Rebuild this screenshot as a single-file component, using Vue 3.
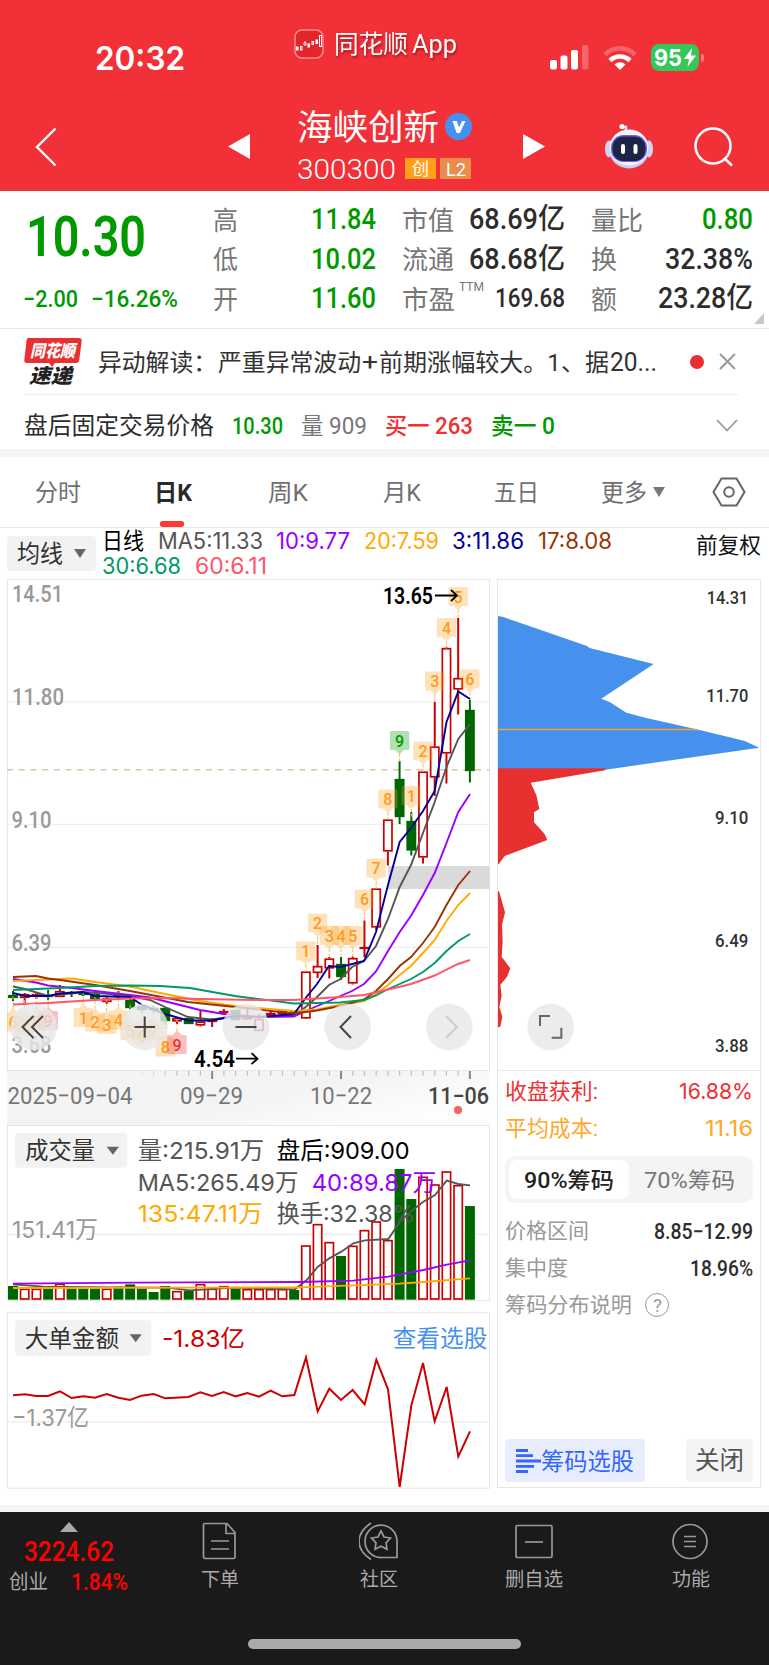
<template>
  <div class="page">
    <!-- Status bar + stock title -->
    <header class="header">
      <div class="status">
        <FitText class="clock" t="20:32" :w="90" :s="33" :b="600" f="Inter" />
        <div class="app-mark">
          <svg width="30" height="30" viewBox="0 0 30 30">
            <rect x="1" y="1" width="28" height="28" rx="7" fill="#e3262b" stroke="#f58a8c" stroke-width="1.6" />
            <g stroke="#fff" stroke-width="1" fill="none">
              <rect x="2.5" y="18" width="1.500" height="3" fill="#fff" />
              <rect x="6.500" y="17.500" width="1.500" height="3.500" />
              <path d="M10 16v-2l1-1.500 1 1.500v2z" />
              <rect x="14" y="15" width="1.500" height="3" fill="#fff" />
              <rect x="18" y="12.500" width="1.500" height="3" />
              <rect x="22" y="11" width="1.500" height="3.500" fill="#fff" />
              <rect x="25.500" y="6.500" width="2" height="11" />
            </g>
          </svg>
          <FitText t="同花顺" :w="74" :s="25" />
          <FitText class="app-word" t="App" :w="45" :s="25" />
        </div>
        <div class="sys">
          <svg width="40" height="26" viewBox="0 0 40 26" fill="#fff">
            <rect x="0" y="15" width="7" height="9.500" rx="2" />
            <rect x="10.500" y="10.500" width="7" height="14" rx="2" />
            <rect x="21" y="5" width="7" height="19.500" rx="2" />
            <rect x="32" y="0" width="6.500" height="24.500" rx="2" opacity=".25" />
          </svg>
          <svg width="34" height="26" viewBox="0 0 34 26" fill="none" stroke="#fff" stroke-width="4.600">
            <path d="M2 9.500a21.500 21.500 0 0 1 30 0" opacity=".25" />
            <path d="M7 15.500a14.500 14.500 0 0 1 20 0" />
            <path d="M11.500 19.500a8 8 0 0 1 11 0l-5.500 5.500z" fill="#fff" stroke="none" />
          </svg>
          <div class="battery">
            <FitText t="95" :w="28" :s="23" :b="700" f="Inter" />
            <svg width="12" height="19" viewBox="0 0 12 19"><path d="M8 0 0 11h5l-1.500 8L12 7.500H7z" fill="#fff" /></svg>
          </div>
          <i class="battery-nub"></i>
        </div>
      </div>

      <div class="title-bar">
        <svg class="back" width="22" height="40" viewBox="0 0 22 40"><path d="M20.500 1.500 2 20l18.500 18.500" fill="none" stroke="#fff" stroke-width="2.400" /></svg>
        <svg class="prev" width="22" height="25" viewBox="0 0 22 25"><path d="M22 0v25L0 12.500z" fill="#fff" /></svg>
        <div class="stock">
          <div class="stock-name">
            <FitText t="海峡创新" :w="142" :s="35" />
            <svg width="27" height="27" viewBox="0 0 27 27">
              <circle cx="13.500" cy="13.500" r="13.500" fill="#4691ee" />
              <path d="M7.500 8h4.300l2.200 6.500L17 8h3.500l-5.600 12h-3.300z" fill="#fff" />
            </svg>
          </div>
          <div class="stock-code">
            <FitText t="300300" :w="99" :s="28" :b="300" />
            <span class="tag tag-gem"><FitText t="创" :w="17" :s="17" /></span>
            <span class="tag tag-l2"><FitText t="L2" :w="20" :s="18" /></span>
          </div>
        </div>
        <svg class="next" width="22" height="25" viewBox="0 0 22 25"><path d="M0 0v25l22-12.500z" fill="#fff" /></svg>
        <svg class="robot" width="48" height="46" viewBox="0 0 48 46">
          <path d="M21 8V4h-4" fill="none" stroke="#dfe3fa" stroke-width="2.500" />
          <circle cx="17" cy="3.500" r="2.600" fill="#fff" />
          <ellipse cx="4" cy="26" rx="4" ry="8.500" fill="#cdd3f5" />
          <ellipse cx="44" cy="26" rx="4" ry="8.500" fill="#cdd3f5" />
          <ellipse cx="24" cy="26.500" rx="20" ry="19" fill="#cbd0f3" />
          <ellipse cx="24" cy="24.500" rx="19.500" ry="18" fill="#f1f2fd" />
          <rect x="6" y="12" width="36" height="27" rx="12.500" fill="#7460d8" />
          <rect x="7.500" y="13.500" width="33" height="24.500" rx="11" fill="#1c2547" />
          <rect x="16" y="21" width="4" height="10" rx="2" fill="#fff" />
          <rect x="28.500" y="21" width="4" height="10" rx="2" fill="#fff" />
        </svg>
        <svg width="42" height="40" viewBox="0 0 42 40" fill="none" stroke="#fff" stroke-width="2.500"><circle cx="20" cy="19" r="17.500" /><path d="m31 31 8 7.500" /></svg>
      </div>
    </header>

    <!-- Quote -->
    <section class="quote">
      <div class="price">
        <FitText t="10.30" :w="120" :s="56" :b="600" />
        <div class="change">
          <FitText t="−2.00" :w="55" :s="24" :b="500" />
          <FitText t="−16.26%" :w="87" :s="24" :b="500" />
        </div>
      </div>
      <div v-for="(group, g) in stats" :key="g" class="stats">
        <div v-for="row in group" :key="row.label" class="stat">
          <FitText class="label" :t="row.label" :w="row.lw" :s="26" />
          <FitText v-if="row.sup" class="sup" :t="row.sup" :w="25" :s="12" />
          <FitText :class="row.green ? 'green' : 'dark'" :t="row.value" :w="row.vw" :s="row.s || 29" :b="500" />
        </div>
      </div>
      <svg class="corner" width="10" height="11" viewBox="0 0 10 11"><path d="M10 0v11H0z" fill="#c8c8c8" /></svg>
    </section>

    <!-- News + after-hours price -->
    <section class="news">
      <div class="news-row">
        <svg class="news-logo" width="58" height="48" viewBox="0 0 58 48">
          <path d="M4 0h51q3 0 2.700 3l-2.500 19q-.4 3-3 3H31l-3 4-3-4H3q-3 0-2.700-3L2.500 3q.4-3 1.500-3z" fill="#e93030" />
          <g font-weight="900" font-style="italic" font-family="'Noto Sans CJK SC', sans-serif">
            <text x="6" y="19" font-size="17" textLength="45" lengthAdjust="spacingAndGlyphs" fill="#fff">同花顺</text>
            <text x="5" y="45" font-size="20" textLength="43" lengthAdjust="spacingAndGlyphs" fill="#222">速递</text>
          </g>
        </svg>
        <div class="news-text">
          <FitText t="异动解读：" :w="119" :s="23.500" />
          <FitText t="严重异常波动" :w="143" :s="23.500" />
          <FitText t="+" :w="16" :s="24" />
          <FitText t="前期涨幅较大。1、据" :w="230" :s="23.500" />
          <FitText t="20..." :w="47" :s="25" />
        </div>
        <i class="dot"></i>
        <svg width="17" height="17" viewBox="0 0 17 17"><path d="m1 1 15 15M16 1 1 16" stroke="#999" stroke-width="2" /></svg>
      </div>
      <div class="after-row">
        <FitText class="dark" t="盘后固定交易价格" :w="190" :s="24" />
        <FitText class="green" t="10.30" :w="51" :s="23" :b="500" />
        <FitText class="gray" t="量 909" :w="66" :s="23" />
        <FitText class="red" t="买一 263" :w="88" :s="23" :b="500" />
        <FitText class="green" t="卖一 0" :w="64" :s="23" :b="500" />
        <svg class="fold" width="22" height="13" viewBox="0 0 22 13"><path d="m1 1 10 10.500L21 1" fill="none" stroke="#999" stroke-width="1.800" /></svg>
      </div>
    </section>

    <!-- Period tabs -->
    <nav class="tabs">
      <div v-for="tab in tabs" :key="tab.name" class="tab" :class="{ active: tab.active }">
        <FitText :t="tab.name" :w="tab.w" :s="24" :b="tab.active ? 700 : 400" />
        <svg v-if="tab.more" width="12" height="10" viewBox="0 0 12 10"><path d="M0 0h12L6 10z" fill="#777" /></svg>
      </div>
      <svg class="setting" width="34" height="30" viewBox="0 0 34 30" fill="none" stroke="#666" stroke-width="2"><path d="M9.500 1.500h15L32.500 15l-8 13.500h-15L1.500 15z" /><circle cx="17" cy="15" r="4.800" /></svg>
    </nav>

    <div class="ma-bar">
      <div class="select">
        <FitText t="均线" :w="46" :s="24" />
        <svg width="12" height="9" viewBox="0 0 12 9"><path d="M0 0h12L6 9z" fill="#666" /></svg>
      </div>
      <div class="ma-list">
        <FitText v-for="m in mas" :key="m.t" :t="m.t" :w="m.w" :s="22.500" :f="m.f" :style="{ color: m.c }" />
      </div>
      <FitText class="adjust" t="前复权" :w="65" :s="22" />
    </div>

    <main class="charts">
      <div class="left">
        <svg class="kline" width="483" height="492" viewBox="7 579 483 492">
          <rect x="7.500" y="579.500" width="482" height="491" fill="#fff" stroke="#e6e6e6" />
          <path d="M8 701.800h481M8 824.400h481M8 947.300h481" stroke="#eee" stroke-width="1.300" />
          <rect x="388" y="866" width="101.500" height="23" fill="#dadada" />
          <path d="M7 769.800h482" stroke="#dcc6a0" stroke-width="1.600" stroke-dasharray="6 5.700" />
          <g class="num axis">
            <text v-for="a in axis" :key="a.t" :x="a.x" :y="a.y" :textLength="a.w" lengthAdjust="spacingAndGlyphs">{{ a.t }}</text>
          </g>

          <g v-for="(c, i) in candles" :key="i" :stroke="c[0] ? '#cc0000' : '#006600'" stroke-width="1.700">
            <path :d="`M${cx(i)} ${c[3]}V${c[1]}M${cx(i)} ${c[2]}V${c[4]}`" stroke-width="2" />
            <rect :x="cx(i) - 4.100" :y="c[1] + .7" width="8.200" :height="Math.max(c[2] - c[1] - 1.400, .3)" :fill="c[0] ? '#fff' : '#006600'" />
          </g>

          <g v-for="(b, k) in badges" :key="'b' + k" :fill="badgeColor[b[3] || 0]">
            <path v-if="b[4]" :d="`M${cx(b[0])} ${b[2] - 4}V${b[2] - 18}`" stroke="#f9b860" stroke-dasharray="3 1.500" />
            <path v-else :d="`M${cx(b[0])} ${b[2] + 23}v8`" stroke="#f9b860" stroke-dasharray="3 1.500" />
            <rect :x="cx(b[0]) - 9.700" :y="b[2]" width="19.400" height="19" rx="1.500" opacity=".3" />
            <path :d="b[4] ? `M${cx(b[0]) - 4.500} ${b[2]}l4.500 -4.500 4.500 4.500z` : `M${cx(b[0]) - 4.500} ${b[2] + 19}l4.500 4.500 4.500 -4.500z`" opacity=".3" />
            <text class="num badge" :x="cx(b[0])" :y="b[2] + 15.500">{{ b[1] }}</text>
          </g>

          <polyline v-for="l in lines" :key="l.c" :points="l.p" fill="none" :stroke="l.c" stroke-width="1.900" />

          <g class="num mark">
            <text x="383" y="604" textLength="50" lengthAdjust="spacingAndGlyphs">13.65</text>
            <text x="194" y="1066.500" textLength="41" lengthAdjust="spacingAndGlyphs">4.54</text>
          </g>
          <path d="M435 595.500h22m-6-5.500 6 5.500-6 5.500M236 1058.700h21.500m-6-5.500 6 5.500-6 5.500" fill="none" stroke="#000" stroke-width="1.800" />

          <circle v-for="x in [33.7, 144.7, 246, 347.7, 449.3]" :key="x" :cx="x" cy="1027" r="23.300" fill="#e8e8e8" opacity=".82" />
          <g fill="none" stroke="#444" stroke-width="2">
            <path d="M33.500 1016 22.500 1027l11 11M43 1016l-11 11 11 11M134.500 1027h20.500M144.700 1016.500v21M235.500 1027h21M351 1016l-10.500 11 10.500 11" />
            <path d="m446 1016 11 11-11 11" stroke="#ccc" />
          </g>
        </svg>

        <svg class="dates" width="483" height="54" viewBox="7 1071 483 54">
          <defs>
            <linearGradient id="dateFade" x1="0" y1="0" x2="1" y2=".5">
              <stop offset="0" stop-color="#f5f5f5" />
              <stop offset=".6" stop-color="#f3f3f3" />
              <stop offset="1" stop-color="#fdfdfd" />
            </linearGradient>
          </defs>
          <rect x="7" y="1071" width="483" height="54" fill="url(#dateFade)" />
          <path v-for="n in 29" :key="n" :d="`M${cx(n + 10)} 1071v${(n + 10) % 11 === 6 ? 8 : 4.500}`" :stroke="(n + 10) % 11 === 6 ? '#888' : '#bbb'" :stroke-width="(n + 10) % 11 === 6 ? 2 : 1.200" :opacity="Math.min(1, n / 4)" />
          <g class="num date">
            <text x="7.500" y="1104" textLength="125" lengthAdjust="spacingAndGlyphs">2025−09−04</text>
            <text x="180" y="1104" textLength="63" lengthAdjust="spacingAndGlyphs">09−29</text>
            <text x="310" y="1104" textLength="62" lengthAdjust="spacingAndGlyphs">10−22</text>
            <text class="today" x="428" y="1104" textLength="61" lengthAdjust="spacingAndGlyphs">11−06</text>
          </g>
          <circle cx="458" cy="1110" r="4" fill="#f9605f" />
        </svg>

        <!-- Volume, drawn in thirds of a pixel -->
        <svg width="483" height="176" viewBox="21 15 1449 528">
          <rect x="22.500" y="16.500" width="1446" height="525" fill="#fff" stroke="#e6e6e6" stroke-width="3" />
          <path d="M24 343h1443" stroke="#eee" stroke-width="4" />
          <rect x="45" y="39" width="337" height="104" rx="10" fill="#f2f2f2" />
          <path d="M320 80h37l-18.500 24z" fill="#666" />
          <rect v-for="(v, i) in volumes" :key="i" :x="cx(i) * 3 - (v[0] ? 12.500 : 15)" :y="v[1] + (v[0] ? 2 : 0)" :width="v[0] ? 25 : 30" :height="539 - v[1] - (v[0] ? 4 : 0)" :fill="v[0] ? '#fff' : '#006600'" :stroke="v[0] ? '#cc0000' : 'none'" stroke-width="5" />
          <g class="sub">
            <text v-for="t in volumeTexts" :key="t.t" :x="t.x" :y="t.y" :textLength="t.w" :fill="t.c" lengthAdjust="spacingAndGlyphs">{{ t.t }}</text>
          </g>
          <g fill="none" stroke-width="5.500">
            <polyline stroke="#555" points="39,493 130,500 330,502 500,503 570,511 700,503 885,508 920,480 953,441 988,415 1024,395 1060,370 1095,361 1165,357 1200,305 1235,272 1270,245 1305,225 1340,182 1375,192 1410,196" />
            <polyline stroke="#9900ff" points="39,491 400,488 900,486 1060,482 1165,470 1200,463 1270,450 1340,434 1410,421" />
            <polyline stroke="#ffaa00" points="39,504 600,503 900,502 1040,497 1200,491 1270,486 1410,475" />
          </g>
        </svg>

        <!-- Large order amount -->
        <svg class="orders" width="483" height="177" viewBox="21 20 1449 531">
          <rect x="22.500" y="22.500" width="1446" height="526" fill="#fff" stroke="#e6e6e6" stroke-width="3" />
          <path d="M24 350h1443" stroke="#eee" stroke-width="4" />
          <rect x="45" y="45" width="409" height="106" rx="10" fill="#f2f2f2" />
          <path d="M389 87h36l-18 24z" fill="#666" />
          <g class="sub">
            <text x="74" y="124" textLength="283" lengthAdjust="spacingAndGlyphs" fill="#333">大单金额</text>
            <text x="486" y="125" textLength="249" lengthAdjust="spacingAndGlyphs" fill="#cc0000">-1.83亿</text>
            <text x="1178" y="124" textLength="284" lengthAdjust="spacingAndGlyphs" fill="#4691ee">查看选股</text>
            <text x="36" y="362" textLength="231" lengthAdjust="spacingAndGlyphs" fill="#999">−1.37亿</text>
          </g>
          <polyline fill="none" stroke="#cc0000" stroke-width="6" :points="orders" />
        </svg>
      </div>

      <!-- Chip distribution -->
      <aside class="right">
        <svg width="262" height="490" viewBox="25 15 786 1470">
          <path d="M25 123 38 125 110 150 292 213 300 219 492 267 335 371 360 381 410 413 470 429 620 463 720 487 765 498 809 518 347 584 25 584z" fill="#4691ee" />
          <path d="M25 580H347V586L123 623 140 660 149 702 133 712V742L165 777 173 795 45 843 27 868H25zM25 948h3L46 1012 37 1050 39 1100 36 1145 62 1180 52 1205 32 1230 36 1262 29 1295 38 1325 32 1355 25 1357z" fill="#e93030" />
          <path d="M25 463.500H622" stroke="#f5a030" stroke-width="4.500" />
          <g class="num chip-axis">
            <text v-for="a in chipAxis" :key="a[0]" :x="776 - a[2]" :y="a[1]" :textLength="a[2]" lengthAdjust="spacingAndGlyphs">{{ a[0] }}</text>
          </g>
          <circle cx="183" cy="1356" r="70" fill="#ececec" />
          <path d="M151 1353v-30h30M186 1388h29v-30" fill="none" stroke="#666" stroke-width="6" />
        </svg>
        <div class="chip-info">
          <div class="line red"><FitText t="收盘获利:" :w="93" :s="21.500" /><FitText t="16.88%" :w="74" :s="22" f="Inter" /></div>
          <div class="line orange"><FitText t="平均成本:" :w="93" :s="21.500" /><FitText t="11.16" :w="48" :s="22" f="Inter" /></div>
          <div class="segment">
            <span class="on"><FitText t="90%筹码" :w="90" :s="22" :b="500" /></span>
            <span class="off"><FitText t="70%筹码" :w="91" :s="22" /></span>
          </div>
          <div class="line"><FitText t="价格区间" :w="84" :s="21" /><FitText class="dark" t="8.85−12.99" :w="99" :s="21.500" :b="500" /></div>
          <div class="line"><FitText t="集中度" :w="63" :s="21" /><FitText class="dark" t="18.96%" :w="63" :s="21.500" :b="500" /></div>
          <div class="line explain">
            <FitText t="筹码分布说明" :w="127" :s="21" />
            <span class="help"><FitText t="?" :w="9" :s="18" /></span>
          </div>
          <div class="actions">
            <div class="pick">
              <svg width="25" height="24" viewBox="0 0 25 24"><path d="M0 1.500h12M0 6.700h17M0 12h25M0 17.300h18M0 22.500h12" stroke="#3366ff" stroke-width="2.800" /></svg>
              <FitText t="筹码选股" :w="93" :s="23.500" />
            </div>
            <div class="close"><FitText t="关闭" :w="49" :s="24.500" /></div>
          </div>
        </div>
      </aside>
    </main>

    <footer class="footer">
      <div class="nav">
        <div class="index">
          <svg width="18" height="10" viewBox="0 0 18 10"><path d="M9 0l9 10H0z" fill="#aaa" /></svg>
          <FitText class="index-value" t="3224.62" :w="90" :s="28" :b="500" />
          <div class="index-row">
            <FitText t="创业" :w="39" :s="20" />
            <FitText class="index-value" t="1.84%" :w="57" :s="23" :b="500" />
          </div>
        </div>
        <div class="nav-item">
          <svg viewBox="0 0 40 38"><path d="M5 1.500h22l8 9V35q0 1.500-1.500 1.500h-27Q3.500 36.500 3.500 35V3q0-1.500 1.500-1.500zM26 2v9.500h9M11 19h18M11 27h18" /></svg>
          <FitText t="下单" :w="38" :s="19" />
        </div>
        <div class="nav-item">
          <svg viewBox="0 0 40 38"><path d="M38 35.500H23A16 16.200 0 1 1 38 19zM12 1C-4 12-4 27 12 37.500M22 9l3 6 6.500 1-4.500 4.800 1 6.500-6-3-6 3 1-6.500L12.500 16l6.500-1z" /></svg>
          <FitText t="社区" :w="38" :s="19" />
        </div>
        <div class="nav-item">
          <svg viewBox="0 0 40 38"><rect x="2" y="3.500" width="36" height="32" rx="1.500" /><path d="M11 20h18" /></svg>
          <FitText t="删自选" :w="58" :s="19" />
        </div>
        <div class="nav-item last">
          <svg viewBox="0 0 40 38"><circle cx="19" cy="19.500" r="17" /><path d="M13 14.500h12M13 19.500h12M13 24.500h12" /></svg>
          <FitText t="功能" :w="38" :s="19" />
        </div>
      </div>
      <div class="home-bar"></div>
    </footer>
  </div>
</template>

<script setup>
import { h } from 'vue'

// One line of text fitted to a fixed width, centred on its own height
const FitText = (props) => {
  const height = Math.round(props.s * 1.2)
  return h('svg', { class: 'fit', width: props.w, height }, [
    h('text', {
      x: 0,
      y: height / 2 + props.s * 0.365,
      fill: 'currentColor',
      'font-size': props.s,
      'font-weight': props.b || 400,
      'font-family': `${props.f || 'Roboto'}, 'Noto Sans CJK SC', sans-serif`,
      textLength: props.w,
      lengthAdjust: 'spacingAndGlyphs',
    }, props.t),
  ])
}
FitText.props = ['t', 'w', 's', 'b', 'f']

const stats = [
  [
    { label: '高', lw: 25, value: '11.84', vw: 65, green: true },
    { label: '低', lw: 25, value: '10.02', vw: 65, green: true },
    { label: '开', lw: 25, value: '11.60', vw: 65, green: true },
  ],
  [
    { label: '市值', lw: 52, value: '68.69亿', vw: 96 },
    { label: '流通', lw: 52, value: '68.68亿', vw: 96 },
    { label: '市盈', lw: 53, value: '169.68', vw: 70, s: 25, sup: 'TTM' },
  ],
  [
    { label: '量比', lw: 52, value: '0.80', vw: 51, green: true },
    { label: '换', lw: 26, value: '32.38%', vw: 88 },
    { label: '额', lw: 26, value: '23.28亿', vw: 95 },
  ],
]

const tabs = [
  { name: '分时', w: 46 },
  { name: '日K', w: 38, active: true },
  { name: '周K', w: 40 },
  { name: '月K', w: 38 },
  { name: '五日', w: 45 },
  { name: '更多', w: 46, more: true },
]

const mas = [
  { t: '日线', w: 42, c: '#000' },
  { t: 'MA5:11.33', w: 105, c: '#555', f: 'Inter' },
  { t: '10:9.77', w: 74, c: '#9900ff', f: 'Inter' },
  { t: '20:7.59', w: 75, c: '#ffaa00', f: 'Inter' },
  { t: '3:11.86', w: 72, c: '#000099', f: 'Inter' },
  { t: '17:8.08', w: 74, c: '#993300', f: 'Inter' },
  { t: '30:6.68', w: 79, c: '#009966', f: 'Inter' },
  { t: '60:6.11', w: 72, c: '#ff5566', f: 'Inter' },
]

const cx = (i) => +(13 + i * 11.715).toFixed(2)

const axis = [
  { t: '14.51', x: 12, y: 601.5, w: 51 },
  { t: '11.80', x: 12, y: 705, w: 52 },
  { t: '9.10', x: 11.5, y: 828, w: 40 },
  { t: '6.39', x: 11.5, y: 950.5, w: 40 },
  { t: '3.68', x: 11.5, y: 1053, w: 40 },
]

// [up, body top, body bottom, high, low]
const candles = [
  [0, 995, 998, 991, 1001], [1, 994, 998, 993, 1003], [1, 994, 996, 993, 999], [0, 995, 997, 990, 1000],
  [1, 991, 997, 985, 997], [0, 992, 994, 991, 997], [0, 993, 995, 992, 996], [0, 994, 999, 993, 1000],
  [1, 998.5, 1002, 997, 1004], [0, 995, 997, 991, 998], [0, 1000, 1008, 999, 1009], [0, 1006, 1010, 1005, 1013],
  [0, 1008, 1010, 1006, 1013], [0, 1008, 1021, 1007, 1025], [1, 1018, 1021.5, 1017, 1024], [0, 1018, 1024, 1017, 1024],
  [1, 1021.5, 1025.5, 1011, 1026.5], [1, 1020, 1022, 1018, 1027], [1, 1011, 1013.5, 1009, 1015], [0, 1010, 1020, 1010, 1020],
  [1, 1017, 1019.5, 1008, 1019.5], [1, 1019, 1031, 1014, 1031], [1, 1013, 1015, 1011, 1017], [1, 1010.5, 1014, 1010, 1015],
  [0, 1011, 1014, 1010, 1015], [1, 971.5, 1018.5, 971, 1019], [1, 966, 973, 945, 978], [1, 958.5, 968.5, 957, 978.5],
  [0, 964, 977, 957, 980], [1, 958, 983.5, 956.5, 984.5], [1, 947, 949, 920.5, 957], [1, 888.5, 927.5, 888, 930],
  [1, 819.5, 851.5, 819, 865.5], [0, 779, 817, 761, 824], [0, 821, 850.5, 812, 855.5], [1, 771.5, 857.5, 771, 863.5],
  [1, 746.5, 777.5, 702, 796], [1, 648, 753.5, 647, 783.5], [1, 678, 689.5, 618, 714.5], [0, 710, 771, 700, 782.5],
]

// [candle, digit, top, palette, below the candle]
const badgeColor = ['#ff9a1c', '#e93030', '#009900']
const badges = [
  [0, '6', 1012.5, 0, 1], [1, '7', 1016, 0, 1], [2, '8', 1012.5, 0, 1], [3, '9', 1011, 1, 1],
  [6, '1', 1008, 0, 1], [7, '2', 1012.5, 0, 1], [8, '3', 1015, 0, 1], [9, '4', 1010.5, 0, 1],
  [10, '5', 1021, 0, 1], [11, '6', 1026, 0, 1], [12, '7', 1021, 0, 1], [13, '8', 1037.5, 0, 1], [14, '9', 1035, 1, 1],
  [25, '1', 941.5], [26, '2', 913.5], [27, '3', 926], [28, '4', 926], [29, '5', 926],
  [30, '6', 889.5], [31, '7', 858.5], [32, '8', 789.5], [33, '9', 731, 2], [34, '1', 786],
  [35, '2', 741.5], [36, '3', 671.5], [37, '4', 618], [38, '5', 587], [39, '6', 669.5],
]

const lines = [
  { c: '#555555', p: '13,986.5 25,989 48,996 83,992 118,994.5 135,997 150,1000 165,1007 188,1017 212,1019.5 235,1016 260,1017 294,1015 305.7,1007 317,997 329,985 340.5,979 352,967 364,961 376,946 388,919 399.7,887 411,865 423,833 434.7,802 446.5,767 458.3,739 470,724' },
  { c: '#9900ff', p: '13,979 36,982.5 48,985.5 72,988 95,991 130,995 150,997.5 172,1003 200,1010 224,1014 260,1017 294,1016.5 305.7,1011 329,1001 352,991 364,984 376,971.5 388,951 399.7,932 411,915.7 423,895 434.7,873 446.5,843 458.3,812 470,794' },
  { c: '#ffaa00', p: '13,981 48,979.5 72,978.5 95,982 130,986.5 165,994 200,1001 235,1006 294,1011 317,1009.5 340,1005 364,1001 376,994 388,985 399.7,975 411,966 423,953 434.7,940 446.5,921 458.3,905 470,893' },
  { c: '#000099', p: '13,993 25,996 48,996 60,993.5 83,992 95,996 130,997 142,1005 165,1014 188,1020.5 212,1020.5 235,1016 260,1017 294,1014 305.7,998 317,984 329,966 340.5,967 364,961 376,932 388,885 399.7,842 411,828 423,811 434.7,791 446.5,722 458.3,691.5 470,699' },
  { c: '#993300', p: '13,977 36,976 48,978.5 60,980 95,985 130,991 188,1002 235,1007 294,1013.5 317,1010.5 340.5,1006 364,999.5 376,991 388,979 399.7,966 411,957 423,943 434.7,927 446.5,905 458.3,885 470,871' },
  { c: '#009966', p: '13,990 60,988 95,986 130,985.5 160,986 190,988 235,996 294,1003.5 340,1002.5 364,1000 376,995.5 388,989 399.7,984 411,979 423,972 434.7,963 446.5,951 458.3,941 470,934' },
  { c: '#ff5566', p: '13,1004.5 48,1003 95,1000 130,998.5 165,998 200,999 260,1000 294,1000 340,997 364,995 399,987 411,984 434.7,975.5 458,964 470,960' },
]

const volumeTexts = [
  { t: '成交量', x: 76, y: 117, w: 209, c: '#333' },
  { t: '量:215.91万', x: 413, y: 118, w: 379, c: '#555' },
  { t: '盘后:909.00', x: 830, y: 118, w: 399, c: '#000' },
  { t: 'MA5:265.49万', x: 413, y: 212, w: 482, c: '#555' },
  { t: '40:89.87万', x: 935, y: 212, w: 374, c: '#9900ff' },
  { t: '135:47.11万', x: 413, y: 306, w: 376, c: '#ffaa00' },
  { t: '换手:32.38%', x: 830, y: 306, w: 416, c: '#555' },
  { t: '151.41万', x: 36, y: 353, w: 258, c: '#999' },
]

// [up, bar top]
const volumes = [
  [0, 498], [1, 506], [1, 506], [0, 506], [1, 491], [0, 506], [0, 506], [0, 506], [1, 506], [0, 500],
  [0, 493], [0, 506], [0, 516], [0, 498], [1, 513], [0, 512], [1, 492], [1, 506], [1, 498], [0, 506],
  [1, 507], [1, 507], [1, 507], [1, 507], [0, 510], [1, 376], [1, 312], [1, 366], [0, 408], [1, 377],
  [1, 330], [1, 304], [1, 360], [0, 147], [0, 237], [1, 170], [1, 193], [1, 154], [1, 195], [0, 258],
]

const orders = '39,270 75,267 108,272 144,272 180,258 215,278 250,273 285,277 320,266 355,277 390,284 425,271 461,266 496,279 565,275 601,261 636,272 671,260 707,273 742,263 777,274 812,256 847,273 883,269 918,156 953,318 988,250 1023,284 1058,254 1094,297 1129,163 1164,252 1199,545 1234,300 1269,173 1304,348 1340,245 1375,453 1410,378'

const chipAxis = [
  ['14.31', 88, 125],
  ['11.70', 380, 126],
  ['9.10', 748, 100],
  ['6.49', 1116, 100],
  ['3.88', 1431, 100],
]
</script>

<style>
body {
  margin: 0;
  background: #fff;
}
</style>

<style scoped>
.page {
  width: 769px;
  height: 1665px;
  overflow: hidden;
  display: flex;
  flex-direction: column;
  background: #fff;
  font-family: Roboto, "Noto Sans CJK SC", sans-serif;
}

.page svg {
  display: block;
  flex: none;
}

.fit,
.news-logo,
.dates {
  overflow: visible;
}

.green { color: #009900; }
.dark { color: #2d2d2d; }
.gray { color: #777; }
.red { color: #f03034; }
.orange { color: #ffa726; }

/* header */
.header {
  height: 191px;
  flex: none;
  background: #f23038;
  color: #fff;
}

.status {
  display: flex;
  height: 95px;
  align-items: flex-start;
}

.clock {
  margin: 38px 0 0 95px;
}

.app-mark {
  display: flex;
  align-items: center;
  margin: 29px 0 0 109px;
}

.app-mark .fit {
  margin-left: 10px;
  filter: drop-shadow(1px 2px 1px rgba(90, 0, 0, 0.5));
}

.app-mark .app-word {
  margin-left: 4px;
}

.sys {
  display: flex;
  align-items: center;
  margin: 44px 0 0 93px;
}

.sys svg + svg {
  margin-left: 13px;
}

.battery {
  width: 48px;
  height: 27px;
  margin-left: 14px;
  border-radius: 8px;
  background: #34c759;
  display: flex;
  align-items: center;
  justify-content: center;
}

.battery svg + svg {
  margin-left: 2px;
}

.battery-nub {
  width: 3px;
  height: 8px;
  margin-left: 2px;
  border-radius: 0 3px 3px 0;
  background: rgba(255, 255, 255, 0.35);
}

.title-bar {
  display: flex;
  align-items: center;
  height: 96px;
}

.back { margin: 8px 0 0 35px; }
.prev { margin: 7px 0 0 171px; }

.stock {
  width: 177px;
  margin: 3px 0 0 47px;
}

.stock-name {
  display: flex;
  align-items: center;
  justify-content: space-between;
  width: 175px;
  margin-top: -1px;
}

.stock-code {
  display: flex;
  align-items: center;
  height: 32px;
  margin-top: 3px;
}

.stock-code > .fit {
  margin-top: 4px;
}

.tag {
  display: flex;
  align-items: center;
  justify-content: center;
  width: 31px;
  height: 21px;
  margin: 4px 0 0 9px;
  background: #ff9f1a;
}

.tag-l2 {
  margin-left: 4px;
  background: #e88d4a;
}

.next { margin: 7px 0 0 49px; }
.robot { margin: 6px 40px 0 60px; }
.robot + svg { margin-top: 8px; }

/* quote */
.quote {
  display: flex;
  height: 129px;
  padding-top: 8px;
  flex: none;
  border-bottom: 1.5px solid #e8e8e8;
  box-sizing: content-box;
}

.price {
  width: 190px;
  padding-left: 23px;
  color: #009900;
}

.price > .fit {
  margin: 3px 0 0 3px;
}

.change {
  display: flex;
  gap: 13px;
  margin-top: 15px;
}

.stats {
  width: 163px;
  margin-right: 26px;
}

.stats:nth-of-type(4) {
  width: 162px;
  margin-right: 1px;
}

.stat {
  display: flex;
  align-items: center;
  justify-content: space-between;
  height: 39.5px;
}

.label {
  color: #777;
  margin-top: 3px;
}

.sup {
  color: #777;
  align-self: flex-start;
  margin: 2px 8px 0 0;
}

.corner {
  align-self: flex-end;
  margin: 0 0 4px;
}

/* news */
.news {
  height: 120px;
  flex: none;
  border-bottom: 8px solid #f5f5f5;
}

.news-row {
  display: flex;
  align-items: center;
  height: 65px;
  margin: 0 31px 0 24px;
  border-bottom: 1.5px solid #ececec;
  color: #333;
}

.news-text {
  display: flex;
  align-items: center;
  gap: 1px;
  margin-left: 16px;
}

.dot {
  width: 14px;
  height: 14px;
  margin: 0 15px 0 33px;
  border-radius: 50%;
  background: #e93030;
  flex: none;
}

.after-row {
  display: flex;
  align-items: center;
  gap: 18px;
  height: 53px;
  padding: 8px 31px 0 24px;
  box-sizing: border-box;
}

.fold {
  margin-left: auto;
}

/* tabs */
.tabs {
  display: flex;
  align-items: center;
  height: 71px;
  flex: none;
  border-bottom: 1.5px solid #e8e8e8;
  box-sizing: border-box;
  color: #707070;
}

.tab {
  display: flex;
  align-items: center;
  justify-content: center;
  gap: 6px;
  width: 115px;
  height: 70px;
  box-sizing: border-box;
}

.tab:nth-child(n + 4) { width: 114px; }
.tab:nth-child(6) { width: 119px; }

.active {
  color: #2a2a2a;
  position: relative;
}

.active::after {
  content: "";
  position: absolute;
  left: 45px;
  bottom: 0;
  width: 24px;
  height: 6px;
  border-radius: 2.5px;
  background: #fc3a35;
}

.setting {
  margin-left: 20px;
}

/* moving averages */
.ma-bar {
  display: flex;
  height: 51px;
  flex: none;
}

.select {
  display: flex;
  align-items: center;
  gap: 11px;
  width: 79px;
  height: 35px;
  margin: 8px 7px 0 7px;
  padding-left: 10px;
  border-radius: 4px;
  background: #f2f2f2;
  color: #333;
}

.ma-list {
  display: flex;
  flex-wrap: wrap;
  align-content: flex-start;
  gap: 0 13.5px;
  width: 540px;
  margin: -1px 0 0 -1px;
}

.ma-list .fit {
  height: 25px;
}

.adjust {
  margin: 4px 0 0 54px;
  color: #111;
}

/* charts */
.charts {
  display: flex;
  gap: 7px;
  height: 926px;
  margin-left: 7px;
  flex: none;
}

.left {
  width: 483px;
}

.num {
  font-family: Roboto, "Noto Sans CJK SC", sans-serif;
  font-weight: 500;
}

.axis {
  font-size: 23px;
  fill: #999;
}

.badge {
  font-size: 16px;
  text-anchor: middle;
}

.mark {
  font-size: 23px;
  font-weight: 600;
  fill: #000;
}

.date {
  font-size: 24px;
  font-weight: 400;
  fill: #777;
}

.date .today {
  fill: #444;
  font-weight: 500;
}

.sub {
  font-family: Inter, "Noto Sans CJK SC", sans-serif;
  font-size: 70px;
}

.orders {
  margin-top: 11px;
}

.chip-axis {
  font-size: 57px;
  fill: #333;
}

.right {
  width: 262px;
  height: 907px;
  border: 1px solid #e6e6e6;
}

.chip-info {
  height: 416px;
  padding: 1px 7px 0 7px;
  border-top: 1px solid #e6e6e6;
  box-sizing: border-box;
  color: #999;
}

.line {
  display: flex;
  align-items: center;
  justify-content: space-between;
  height: 37px;
}

.segment {
  display: flex;
  height: 47px;
  margin: 10px 0 9px;
  padding: 4px;
  border-radius: 10px;
  background: #f4f4f4;
  box-sizing: border-box;
}

.segment span {
  display: flex;
  align-items: center;
  justify-content: center;
  width: 120px;
}

.segment .on {
  border-radius: 8px;
  background: #fff;
  color: #222;
}

.segment .off {
  color: #777;
}

.explain {
  justify-content: flex-start;
  gap: 13px;
}

.help {
  display: flex;
  align-items: center;
  justify-content: center;
  width: 24px;
  height: 24px;
  border: 1.5px solid #999;
  border-radius: 50%;
  box-sizing: border-box;
}

.actions {
  display: flex;
  justify-content: space-between;
  margin-top: 116px;
}

.pick,
.close {
  display: flex;
  align-items: center;
  justify-content: center;
  height: 43px;
  width: 140px;
  border-radius: 4px;
  background: #e8edfe;
  color: #3366ff;
}

.close {
  width: 67px;
  background: #f4f4f4;
  color: #555;
}

/* footer */
.footer {
  height: 160px;
  flex: 1;
  border-top: 7px solid #f4f4f4;
  background: #1a1a1a;
  color: #aaa;
}

.nav {
  display: grid;
  grid-template-columns: 144px 152px 166px 144px 163px;
  height: 127px;
}

.index {
  display: flex;
  flex-direction: column;
  align-items: center;
  width: 137px;
  padding-top: 10px;
}

.index > .fit {
  margin-top: 2px;
}

.index-row {
  display: flex;
  align-items: center;
  justify-content: space-between;
  width: 119px;
}

.index-value {
  color: #ff0000;
}

.nav-item {
  display: flex;
  flex-direction: column;
  align-items: center;
  padding-top: 10px;
}

.nav-item svg:first-child {
  width: 40px;
  height: 38px;
  margin-bottom: 8px;
  fill: none;
  stroke: #999;
  stroke-width: 1.7;
}

.last {
  padding-left: 6px;
}

.home-bar {
  width: 273px;
  height: 10px;
  margin: 0 auto;
  border-radius: 5px;
  background: #aaa;
}
</style>
